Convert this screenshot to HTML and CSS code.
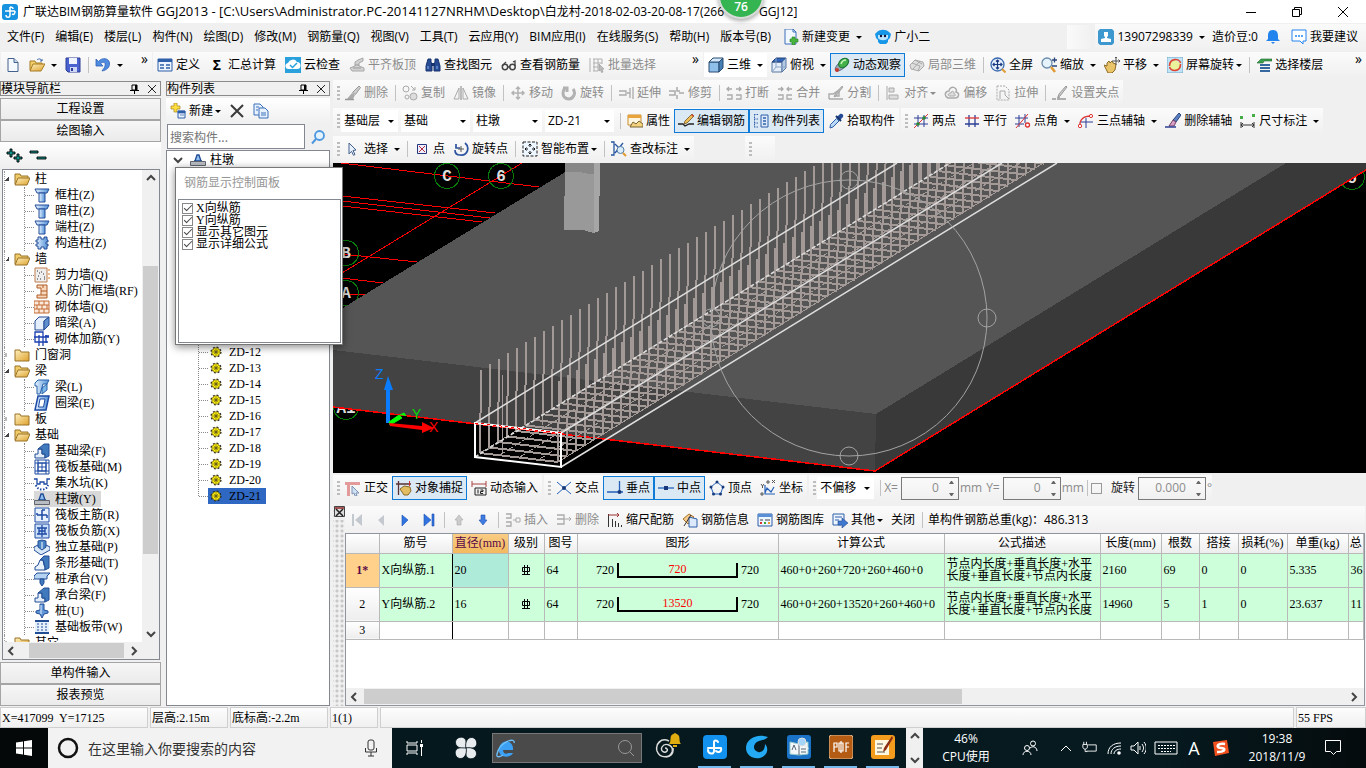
FILE: index.html
```html
<!DOCTYPE html>
<html lang="zh-CN">
<head>
<meta charset="utf-8">
<title>广联达BIM钢筋算量软件 GGJ2013</title>
<link rel="stylesheet" href="styles.css">
</head>
<body>
<svg class="sprite" aria-hidden="true">
<defs>
<linearGradient id="g-fold" x1="0" y1="0" x2="1" y2="1"><stop offset="0" stop-color="#fdf0bf"/><stop offset="1" stop-color="#dfa22c"/></linearGradient>
<linearGradient id="g-blue" x1="0" y1="0" x2="1" y2="0"><stop offset="0" stop-color="#e6f2ff"/><stop offset="1" stop-color="#4f8fd6"/></linearGradient>
</defs>
<symbol id="new" viewBox="0 0 16 16"><path d="M3 1.500h6l4 4v9H3z" fill="#f4f9ff" stroke="#44618d"/><path d="M9 1.500v4h4" fill="#c5d8ee" stroke="#44618d"/></symbol>
<symbol id="open" viewBox="0 0 16 16"><path d="M1 13V4h5l1 2h6v2" fill="#f2cf6d" stroke="#a77d22"/><path d="M1 14l3-7h12l-4 7z" fill="url(#g-fold)" stroke="#a77d22"/><path d="M8 3c2-2 4-1 5 1m0-2v2h-2" fill="none" stroke="#3a64a8"/></symbol>
<symbol id="save" viewBox="0 0 16 16"><path d="M1 1h14v14H3l-2-2z" fill="#4a62cf" stroke="#2c3c96"/><path d="M4 1h8v6H4z" fill="#eef3ff"/><path d="M5 10h7v5H5z" fill="#cdd6f4"/><path d="M6 11h2v3H6z" fill="#2c3c96"/></symbol>
<symbol id="undo" viewBox="0 0 16 16"><path d="M1 2v7h7L5.500 6.500C9 4 11 6 10 9c-.5 2-2 3-3 5 5-1 8-4 7.500-8C14 1 7 0 3.500 4.500z" fill="#4f8be0" stroke="#2d5fb4" stroke-width=".8"/></symbol>
<symbol id="define" viewBox="0 0 16 16"><path d="M1 2h14v12H1z" fill="#eaf3ff" stroke="#2f5fa8"/><path d="M1 2h14v3H1z" fill="#2f5fa8"/><path d="M3 8h4m2 0h4M3 11h4m2 0h4" stroke="#2f5fa8" stroke-width="1.500"/></symbol>
<symbol id="cloud" viewBox="0 0 16 16"><path d="M0 0h16v16H0z" fill="#2aa0dc"/><path d="M4 12a3 3 0 0 1-1-6 5 5 0 0 1 9-1 3.500 3.500 0 0 1 0 7z" fill="#fff"/><path d="M5 8l2.500 2.500L12 6" fill="none" stroke="#2aa0dc" stroke-width="1.500"/></symbol>
<symbol id="flat" viewBox="0 0 16 16"><path d="M1 11l5-2V5l3-2 5-2v3l-4 2v3l5 2v3H3z" fill="#d2d2d2" stroke="#a8a8a8"/><path d="M4 11h8M6 8h4" stroke="#999"/></symbol>
<symbol id="find" viewBox="0 0 16 16"><path d="M3 2h3v3l1 2v7H1V9zM10 2h3l2 7v5H9V7l1-2z" fill="#274b94" stroke="#18336f"/><path d="M3 9v3m9-3v3" stroke="#8fb4ed"/><path d="M6 6h4v3H6z" fill="#18336f"/></symbol>
<symbol id="glasses" viewBox="0 0 16 16"><circle cx="4" cy="10" r="2.700" fill="none" stroke="#444" stroke-width="1.500"/><circle cx="11.500" cy="10" r="2.700" fill="none" stroke="#444" stroke-width="1.500"/><path d="M1 9l4-4M6.500 10h2.500M14 9V4l-2 1" fill="none" stroke="#444" stroke-width="1.300"/></symbol>
<symbol id="batch" viewBox="0 0 16 16"><path d="M1 1v14M4 2h9M4 6h9M4 10h5M4 14h5M5 2v12M9 2v12M13 2v5" stroke="#b0b0b0" fill="none"/><path d="M10 7l5 5-2 .5 1 2.500-1.500.5-1-2.500L10 14z" fill="#bbb" stroke="#999" stroke-width=".6"/></symbol>
<symbol id="cube" viewBox="0 0 16 16"><path d="M1 5h10v10H1z" fill="#8fc0ea" stroke="#2b4a70"/><path d="M1 5l4-4h10l-4 4z" fill="#d3eafc" stroke="#2b4a70"/><path d="M15 1v10l-4 4V5z" fill="#4680b4" stroke="#2b4a70"/></symbol>
<symbol id="topview" viewBox="0 0 16 16"><path d="M1 5h10v10H1z" fill="#e4edf8" stroke="#5877a0"/><path d="M1 5l4-4h10l-4 4z" fill="#3366b8" stroke="#27457a"/><path d="M15 1v10l-4 4V5z" fill="#b4cbe6" stroke="#5877a0"/><path d="M5 1v9L1 15m4-5h10" fill="none" stroke="#8aa4c8"/></symbol>
<symbol id="orbit" viewBox="0 0 16 16"><ellipse cx="8" cy="8" rx="8.500" ry="3.500" transform="rotate(-40 8 8)" fill="#9aa8b4" stroke="#3b5678" stroke-width=".7"/><ellipse cx="9.500" cy="6" rx="5.500" ry="4" transform="rotate(-40 9.500 6)" fill="#43b04a" stroke="#1d7430"/><path d="M7 7c1-3 3-4 5-4" fill="none" stroke="#c5f5bd" stroke-width="1.500"/><circle cx="3" cy="13" r="2" fill="#c73b2e"/></symbol>
<symbol id="local3d" viewBox="0 0 16 16"><path d="M1 8l5-5 8 2 1 4-5 5-8-2z" fill="#dedede" stroke="#aaa"/><path d="M3 6l8 3-2 5M6 3l7 4m-2-3l-7 8" fill="none" stroke="#aaa"/></symbol>
<symbol id="full" viewBox="0 0 16 16"><circle cx="7.500" cy="7.500" r="6.500" fill="#e6f0fb" stroke="#3b6ab0" stroke-width="1.300"/><path d="M12 12l3.500 3.500" stroke="#e09a32" stroke-width="2"/><path d="M7.500 3v9M3 7.500h9M6 4.500L7.500 3 9 4.500m-3 6L7.500 12 9 10.500M4.500 6L3 7.500 4.500 9m6-3L12 7.500 10.500 9" stroke="#1c3a80" stroke-width="1.200" fill="none"/></symbol>
<symbol id="zoomi" viewBox="0 0 16 16"><circle cx="6" cy="6" r="5" fill="#e6f3fd" stroke="#6b8cab" stroke-width="1.300"/><path d="M10 10l4 5" stroke="#e09a32" stroke-width="2.500"/><path d="M11 3h5M13.500 .5v5M11 9h5" stroke="#27457a" stroke-width="1.300"/></symbol>
<symbol id="pan" viewBox="0 0 16 16"><path d="M0 8l3 1V6l2-2 1 2 2-2 1 2 3 1-1 6-3 3H4z" fill="#e9c468" stroke="#8b6a24"/><path d="M12 0v8M8 4h8m-5-3l1-1 1 1m1.500 1.500L16 4l-1.500 1.500" fill="none" stroke="#555"/></symbol>
<symbol id="rot" viewBox="0 0 16 16"><path d="M0 0h16v16H0z" fill="#bfe5f7" stroke="#74a7cc"/><path d="M3 6l5-3 5 3v5l-5 3-5-3z" fill="#eaf29b"/><path d="M2.500 9c0-8 10-8 11-3m0 1c0 8-9 8-11 3" fill="none" stroke="#e04434" stroke-width="1.600"/></symbol>
<symbol id="floors" viewBox="0 0 16 16"><path d="M1 6l4-4h11v2H8l-1 2z" fill="#3da04e" stroke="#1d6a2c" stroke-width=".6"/><path d="M4 7h10v2H4zM4 10h10v2H4zM4 13h10v2H4z" fill="#35689f"/></symbol>
<symbol id="brush" viewBox="0 0 16 16"><path d="M14 1l1.500 1.500-5 7-3-2z" fill="#ccc" stroke="#999"/><path d="M7 8l3 2-2 4H2z" fill="#aaa"/><path d="M0 14.500h9" stroke="#999" stroke-width="1.500"/></symbol>
<symbol id="copy" viewBox="0 0 16 16"><circle cx="4" cy="4" r="3" fill="none" stroke="#aaa"/><circle cx="11.500" cy="11.500" r="3.500" fill="#ddd" stroke="#aaa"/><circle cx="5" cy="12" r="2" fill="none" stroke="#aaa"/><path d="M9 1l4 4m0-3v3h-3" stroke="#aaa" fill="none"/></symbol>
<symbol id="mirror" viewBox="0 0 16 16"><path d="M1 14L6 3v11zM15 14L10 3v11z" fill="none" stroke="#aaa"/><path d="M8 1v14" stroke="#aaa" stroke-width="1.500"/></symbol>
<symbol id="move" viewBox="0 0 16 16"><path d="M8 2v12M2 8h12M6 4l2-2 2 2m-4 8l2 2 2-2M4 6L2 8l2 2m8-4l2 2-2 2" fill="none" stroke="#b2b2b2" stroke-width="1.500"/></symbol>
<symbol id="rotate" viewBox="0 0 16 16"><path d="M3 4c-3 8 2 10 5 10s8-5 4-10M2 3h4v4" fill="none" stroke="#b2b2b2" stroke-width="3"/></symbol>
<symbol id="extend" viewBox="0 0 16 16"><path d="M1 6h7v4H1m8-2h3M12 3v10m3-11v12" stroke="#aaa" fill="none" stroke-width="1.300"/></symbol>
<symbol id="trim" viewBox="0 0 16 16"><path d="M0 6h6v4H0m10-2h5M8 2v4h3m-3 8v-4" stroke="#aaa" fill="none" stroke-width="1.500"/></symbol>
<symbol id="break" viewBox="0 0 16 16"><path d="M1 4h5m4 0h5M3 2L1 4l2 2m10-4l2 2-2 2M1 10h5v4H1m9-4h5v4h-5" stroke="#aaa" fill="none" stroke-width="1.300"/></symbol>
<symbol id="merge" viewBox="0 0 16 16"><path d="M1 4h5m4 0h5M4 2l2 2-2 2m8-4l-2 2 2 2M1 10h5v4H1m14-4h-5v4h5" stroke="#aaa" fill="none" stroke-width="1.300"/></symbol>
<symbol id="split" viewBox="0 0 16 16"><path d="M1 14V9h4l6-4v6H7M1 14h14" fill="none" stroke="#aaa" stroke-width="1.400"/><path d="M14 1l1 1-7 9-2 1 1-3z" fill="#bbb" stroke="#999" stroke-width=".7"/></symbol>
<symbol id="align" viewBox="0 0 16 16"><path d="M2 1v14M4 3h5v4H4zM4 10h9v4H4z" fill="#ddd" stroke="#aaa"/></symbol>
<symbol id="offset" viewBox="0 0 16 16"><path d="M4 13c-5-3-2-7 1-7 1-6 9-4 7 1 4 1 3 6-1 6z" fill="none" stroke="#aaa" stroke-width="1.500"/><path d="M5 11c-2-2 0-3 2-3 0-3 4-2 3 1 2 0 2 2 0 2z" fill="#ddd" stroke="#aaa"/></symbol>
<symbol id="stretch" viewBox="0 0 16 16"><path d="M2 1h8l4 4v10H2z" fill="none" stroke="#aaa" stroke-dasharray="2 1"/><path d="M5 14V6h5m0 0v4l4 4" fill="none" stroke="#aaa"/></symbol>
<symbol id="grip" viewBox="0 0 16 16"><path d="M0 14h4m4 0h6" stroke="#999" stroke-width="1.500"/><path d="M5 12h3v3H5z" fill="#aaa"/><path d="M14 1l1 1-7 9-2 1 1-3z" fill="#ccc" stroke="#999"/></symbol>
<symbol id="props" viewBox="0 0 16 16"><path d="M1 2h13v10H1z" fill="#fff6e0" stroke="#c78d2d"/><path d="M1 2h13v3H1z" fill="#e8a33a"/><path d="M3 14l3-5 3 2 3-3 4 3v3H5z" fill="#f4d37e" stroke="#7d6332"/></symbol>
<symbol id="edit" viewBox="0 0 16 16"><path d="M0 11h5l2 2 4-2h5" fill="none" stroke="#222" stroke-width="1.300"/><path d="M14 1l2 2-7 7-3 1 1-3z" fill="#efbf55" stroke="#6d5325" stroke-width=".8"/><path d="M14 1l2 2-1 1-2-2z" fill="#cb4b3d"/></symbol>
<symbol id="list" viewBox="0 0 16 16"><path d="M1 1.500h5M1 6h5M1 10h5M1 14h5M1.500 1v13" stroke="#2f5fa8" stroke-dasharray="1.500 1"/><path d="M8 2h7v12H8z" fill="#dbe9fa" stroke="#2f5fa8"/><path d="M10 5h3m-3 3h3m-3 3h3" stroke="#2f5fa8" stroke-width="1.500"/></symbol>
<symbol id="pick" viewBox="0 0 16 16"><path d="M9 4l3-3c2-1 4 1 3 3l-3 3z" fill="#254a96"/><path d="M8 3l5 5" stroke="#16336e" stroke-width="2"/><path d="M8.500 5.500l2.500 2.500-6 6-3 1 .5-3.500z" fill="#b9d9f8" stroke="#2f5fa8"/></symbol>
<symbol id="twopt" viewBox="0 0 16 16"><path d="M5 2v12M11 2v12M1 5h14M1 11h14" stroke="#2d3f96"/><path d="M1 15L15 1" stroke="#d33"/><circle cx="5" cy="11" r="1.800" fill="#2a8a34"/><circle cx="11" cy="5" r="1.800" fill="#2a8a34"/></symbol>
<symbol id="parallel" viewBox="0 0 16 16"><path d="M5 2v12M11 2v12M1 11h14" stroke="#2d3f96" stroke-width="1.300"/><path d="M1 5h14" stroke="#d33" stroke-width="1.300"/></symbol>
<symbol id="angle" viewBox="0 0 16 16"><path d="M4 2v12M10 1v9M0 5h13M0 11h9" stroke="#2d3f96"/><path d="M1 15L13 1" stroke="#d33"/><circle cx="12.500" cy="12" r="2" fill="#fff" stroke="#d33" stroke-width="1.300"/></symbol>
<symbol id="arc3" viewBox="0 0 16 16"><path d="M2 14C1 6 6 3 13 3" fill="none" stroke="#d33" stroke-width="1.300"/><path d="M8 5v10M3 9h12" stroke="#2d3f96"/><circle cx="2" cy="13" r="1.700" fill="#fff" stroke="#d33"/><circle cx="13" cy="3" r="1.600" fill="#fff" stroke="#d33"/></symbol>
<symbol id="delaxis" viewBox="0 0 16 16"><path d="M14 0l2 2-5 7-3-2z" fill="#5d7fc4" stroke="#27457a"/><path d="M8 7l3 2-2 4H4z" fill="#d99fc4" stroke="#704266"/><path d="M0 14h11" stroke="#2d3f96" stroke-width="1.500"/></symbol>
<symbol id="dim" viewBox="0 0 16 16"><path d="M1 9v6m13-6v6M1 12h13M3 10l-2 2 2 2m9-4l2 2-2 2" stroke="#333" fill="none"/><path d="M0 3h3v3H0zM12 1h3v3h-3z" fill="#45ad48"/></symbol>
<symbol id="cursor" viewBox="0 0 16 16"><path d="M4 2l7 7-3 .5 2 4-1.500.8-2-4L4 13z" fill="#e8f1fc" stroke="#44618d"/></symbol>
<symbol id="point" viewBox="0 0 16 16"><path d="M3.500 3.500h9v9h-9z" fill="#eef" stroke="#23357d"/><path d="M5 5l6 6m0-6l-6 6" stroke="#b22b3f"/></symbol>
<symbol id="rotpt" viewBox="0 0 16 16"><path d="M3 3v4h4M12 2c5 4 3 13-5 12-3 0-5-2-5-5" fill="none" stroke="#2c53a0" stroke-width="1.700"/><path d="M8 5v6M5 8h6" stroke="#555"/></symbol>
<symbol id="smart" viewBox="0 0 16 16"><path d="M1 1h14v14H1z" fill="#eef6ff" stroke="#222" stroke-dasharray="3 1.500"/><path d="M8 3v3m0 4v3M3 8h3m4 0h3M6.500 4.500L8 3l1.500 1.500m-3 7L8 13l1.500-1.500m-5-5L3 8l1.500 1.500m7-3L13 8l-1.500 1.500" fill="none" stroke="#111"/></symbol>
<symbol id="note" viewBox="0 0 16 16"><path d="M0 1h3v13H0M4 12L12 2M4 3l4 4" fill="none" stroke="#2856a3" stroke-width="1.300"/><circle cx="9.500" cy="9" r="3.500" fill="#d9edfc" stroke="#557ca4"/><path d="M12 12l3 3" stroke="#e09a32" stroke-width="2"/></symbol>
<symbol id="ortho" viewBox="0 0 16 16"><path d="M0 2h15v3H5v11H2V5H0z" fill="#e39a9a"/><path d="M7 6l7 7h-3l1 3h-2l-1-3-2 1z" fill="#cfe0f5" stroke="#7e93b0"/></symbol>
<symbol id="snap" viewBox="0 0 16 16"><path d="M2.500 1v14M0 4h15" stroke="#5a3030" stroke-width="1.300"/><path d="M4 9l4-3 6 1 1 4-3 4H8z" fill="#e2bd62" stroke="#8b6a24"/><path d="M13.500 1v5" stroke="#c33"/></symbol>
<symbol id="dyn" viewBox="0 0 16 16"><path d="M1 1v6m14-6v6M1 4h14" stroke="#a44" fill="none"/><path d="M4 8h11v7H4z" fill="#eee" stroke="#222"/><path d="M7 9.500v4M9.500 10h2.500v1.500H9.500v2H12" stroke="#222" fill="none"/></symbol>
<symbol id="cross" viewBox="0 0 16 16"><path d="M1 2l14 12M15 2L1 14" stroke="#2460b8"/><circle cx="8" cy="8" r="2" fill="#17397c"/></symbol>
<symbol id="perp" viewBox="0 0 16 16"><path d="M0 12h16M12.500 1v11" stroke="#2460b8" stroke-width="1.300"/><circle cx="12.500" cy="12" r="2" fill="#17397c"/></symbol>
<symbol id="mid" viewBox="0 0 16 16"><path d="M0 8h16" stroke="#2460b8" stroke-width="1.300"/><path d="M6 6h4v4H6z" fill="#17397c"/></symbol>
<symbol id="vertex" viewBox="0 0 16 16"><path d="M8 2l6 5-2.500 7h-7L2 7z" fill="none" stroke="#2460b8"/><circle cx="8" cy="2" r="1.500" fill="#17397c"/><circle cx="14" cy="7" r="1.500" fill="#17397c"/><circle cx="2" cy="7" r="1.500" fill="#17397c"/><circle cx="4.500" cy="14" r="1.500" fill="#17397c"/><circle cx="11.500" cy="14" r="1.500" fill="#17397c"/></symbol>
<symbol id="coord" viewBox="0 0 16 16"><path d="M5 5v9h10M5 13l2-5 4 4 3-5" fill="none" stroke="#2460b8" stroke-width="1.200"/><path d="M1 4l1.500 2L4 4M2.500 6v2M12 0l3 3m0-3l-3 3M7 1h2v2H7zM1 13h2v2H1z" stroke="#555" fill="none"/></symbol>
<symbol id="insert" viewBox="0 0 16 16"><path d="M1 2h5v4H1m0 4h5v4H1" stroke="#aaa" stroke-width="1.300" fill="none"/><path d="M15 6h-4v4h4zM11 8H8" stroke="#aaa" fill="none"/></symbol>
<symbol id="delrow" viewBox="0 0 16 16"><path d="M1 3h7v4H1m0 0h7v5H1" stroke="#aaa" stroke-width="1.300" fill="none"/><path d="M8 7h7m-2-2l2 2-2 2" stroke="#aaa" fill="none"/></symbol>
<symbol id="scale" viewBox="0 0 16 16"><path d="M1.500 2v13M5.500 7v8M8.500 9v6M11.500 11v4M14.500 13v2" stroke="#333"/><path d="M1 3h11m-2-2l2 2-2 2" stroke="#933" fill="none"/></symbol>
<symbol id="info" viewBox="0 0 16 16"><path d="M1 7l6-5 5 3-6 7z" fill="#f6c98a" stroke="#a8752a"/><path d="M7 5l8 2v8H7z" fill="#dbe9fa" stroke="#2f5fa8"/><path d="M2 14L9 3" stroke="#333"/></symbol>
<symbol id="lib" viewBox="0 0 16 16"><path d="M1 2h14v12H1z" fill="#edf5ff" stroke="#2f5fa8"/><path d="M1 2h14v3H1z" fill="#5a8fd6"/><path d="M3 8h3m2 0h5" stroke="#444"/><path d="M3 11h2" stroke="#d33" stroke-width="2"/><path d="M7 11h2" stroke="#3a3" stroke-width="2"/><path d="M11 11h2" stroke="#e93" stroke-width="2"/></symbol>
<symbol id="other" viewBox="0 0 16 16"><path d="M1 2h11v8l-3 3H1z" fill="#edf5ff" stroke="#2f5fa8"/><path d="M3 5h7M3 8h4" stroke="#2f5fa8"/><path d="M6 9h4V6l6 5-6 5v-3H6z" fill="#3f78cf" stroke="#234b90" stroke-width=".6"/></symbol>
<symbol id="prev" viewBox="0 0 16 16"><path d="M11 3v11L5 8z" fill="#c4c8cf"/></symbol>
<symbol id="first" viewBox="0 0 16 16"><path d="M13 2v12L6 8zM3 2h2v12H3z" fill="#c4c8cf"/></symbol>
<symbol id="next" viewBox="0 0 16 16"><path d="M5 3v11l6-6z" fill="#2f74e0" stroke="#1c52b0" stroke-width=".6"/></symbol>
<symbol id="last" viewBox="0 0 16 16"><path d="M3 2v12l7-6zM11 2h2v12h-2z" fill="#2f74e0" stroke="#1c52b0" stroke-width=".6"/></symbol>
<symbol id="up" viewBox="0 0 16 16"><path d="M8 3l4 5h-2v5H6V8H4z" fill="#ccc" stroke="#aaa" stroke-width=".6"/></symbol>
<symbol id="down" viewBox="0 0 16 16"><path d="M8 13l4-5h-2V3H6v5H4z" fill="#3f7be0" stroke="#1c52b0" stroke-width=".6"/></symbol>
<symbol id="user" viewBox="0 0 16 16"><path d="M2 0h12l2 2v12l-2 2H2l-2-2V2z" fill="#3d98cf"/><path d="M6 3h4v4l-1 1v1l4 1v3H3v-3l4-1V8L6 7z" fill="#fff"/></symbol>
<symbol id="bell" viewBox="0 0 16 16"><path d="M8 1c4 0 5 3 5 6v3l2 2H1l2-2V7c0-3 1-6 5-6z" fill="#2484ee"/><path d="M6 13h4l-2 2z" fill="#2484ee"/></symbol>
<symbol id="chat" viewBox="0 0 16 16"><path d="M1 1h14v11h-3v3l-3-3H1z" fill="#fff" stroke="#2484ee"/><path d="M4 7h8" stroke="#2484ee" stroke-width="1.500" stroke-dasharray="2 1"/></symbol>
<symbol id="docplus" viewBox="0 0 16 16"><path d="M2 0h8l3 3v12H2z" fill="#f2f8ff" stroke="#3a70b8"/><path d="M10 0v3h3" fill="none" stroke="#3a70b8"/><path d="M9 8h3v2h3v3h-3v3H9v-3H7v-3h2z" fill="#49b43c" stroke="#27822a" stroke-width=".6"/></symbol>
<symbol id="mascot" viewBox="0 0 16 16"><path d="M0 5l2-2c3-3 9-3 12 0l2 2-1 4-2 2v2l-2 2H5l-2-2v-2L1 9z" fill="#1897e8"/><path d="M3 6h10v3c-2 3-8 3-10 0z" fill="#bfe7ff"/><circle cx="6" cy="7" r="1.200" fill="#113"/><circle cx="10" cy="7" r="1.200" fill="#113"/></symbol>
<symbol id="newcomp" viewBox="0 0 16 16"><path d="M4 0h3v3h3v3H7v3H4V6H1V3h3z" fill="#ffdf3e" stroke="#a8841d" stroke-width=".7"/><path d="M8 8h7v7H8z" fill="#eaf3ff" stroke="#2f5fa8"/><path d="M8 8h7v2H8zM10 12h4" fill="#2f5fa8" stroke="#2f5fa8" stroke-width=".7"/></symbol>
<symbol id="xmark" viewBox="0 0 16 16"><path d="M2 2l12 12M14 2L2 14" stroke="#3a3a3a" stroke-width="2"/></symbol>
<symbol id="copy2" viewBox="0 0 16 16"><path d="M1 1h6l3 3v8H1z" fill="#e8f2ff" stroke="#3a70b8"/><path d="M6 5h6l3 3v7H6z" fill="#e8f2ff" stroke="#3a70b8"/><path d="M8 10h5m-5 2h5M3 4h3M3 7h2" stroke="#3a70b8"/></symbol>
<symbol id="search" viewBox="0 0 16 16"><circle cx="9.500" cy="6.500" r="4.500" fill="#e3f3ff" stroke="#4c97de" stroke-width="1.800"/><path d="M6 10l-4 4.500" stroke="#4c97de" stroke-width="2"/></symbol>
<symbol id="folder" viewBox="0 0 16 16"><path d="M1 3h5l1 2h8v9H1z" fill="url(#g-fold)" stroke="#997328"/></symbol>
<symbol id="folderopen" viewBox="0 0 16 16"><path d="M1 13V3h5l1 2h7v3" fill="#f0cc69" stroke="#997328"/><path d="M1 14l3-7h12l-3 7z" fill="url(#g-fold)" stroke="#997328"/></symbol>
<symbol id="column" viewBox="0 0 16 16"><path d="M1 2h14l-2 4H3z" fill="url(#g-blue)" stroke="#254c98"/><path d="M5 6h6v9H5z" fill="url(#g-blue)" stroke="#254c98"/></symbol>
<symbol id="gcol" viewBox="0 0 16 16"><path d="M4 2h3v2h3V2h3v3h1v2h-2v2h2v2h-1v3h-3v-2H7v2H4v-3H2V9h2V7H2V5h2z" fill="url(#g-blue)" stroke="#254c98"/></symbol>
<symbol id="shear" viewBox="0 0 16 16"><path d="M1 1h12v14H1z" fill="#eee" stroke="#c07b4b"/><path d="M3 4h1m3 1h1m-4 4h1m4-2h1m-4 5h1m3 0h1M5 6h1m4 4h1M3 12h1" stroke="#333"/><path d="M14 3h2m-2 4h2m-2 4h2" stroke="#d77a24"/></symbol>
<symbol id="doorwall" viewBox="0 0 16 16"><path d="M3 2h10v13H3v-3h4V5H3z" fill="#f8d8bd" stroke="#b05a24"/><path d="M7 8h6M7 12h6M9 2v3" stroke="#b05a24"/></symbol>
<symbol id="brick" viewBox="0 0 16 16"><path d="M0 2h15v12H0z" fill="#fbe9dc" stroke="#c36a35"/><path d="M0 6h15M0 10h15M5 2v4m5-4v4M3 6v4m5-4v4m5-4v4M5 10v4m5-4v4" stroke="#c36a35"/></symbol>
<symbol id="hbeam" viewBox="0 0 16 16"><path d="M1 6l4-4h10l-5 4v9H1z" fill="#e5effb" stroke="#254c98"/><path d="M10 6l5-4v8l-5 5z" fill="#5f8fce" stroke="#254c98"/></symbol>
<symbol id="rebarwall" viewBox="0 0 16 16"><path d="M1 1h8v10H1zM0 6h15M5 4v11m4-5v5M12 4v8m-1-7h4M1 11h13" fill="none" stroke="#1b3fb0" stroke-width="1.300"/></symbol>
<symbol id="beam" viewBox="0 0 16 16"><path d="M1 4l3-3h11l-2 4H9L6 15H3V7H1z" fill="url(#g-blue)" stroke="#2460a8"/><path d="M13 5v6l-5 4V9z" fill="#7db8ea" stroke="#2460a8"/></symbol>
<symbol id="ring" viewBox="0 0 16 16"><path d="M4 1h11l-3 14H1z" fill="url(#g-blue)" stroke="#1d4aa4" stroke-width="1.500"/><path d="M6 4h5l-1.500 8h-5z" fill="#fff" stroke="#1d4aa4"/></symbol>
<symbol id="fbeam" viewBox="0 0 16 16"><path d="M1 15v-4h3V6h4v5h3v4z" fill="#e5effb" stroke="#204c94"/><path d="M4 6l6-5h5v12l-4 2v-4H8V6z" fill="#407abd" stroke="#204c94"/></symbol>
<symbol id="raft" viewBox="0 0 16 16"><path d="M1 1h14v14H1zM4 4h8v8H4zM1 4h14M1 12h14M4 1v14m8-14v14M8 4v8M4 8h8" fill="none" stroke="#1d4aa4"/></symbol>
<symbol id="pit" viewBox="0 0 16 16"><path d="M0 4h3v5h3V7h4v2h3V4h3" fill="none" stroke="#1d4aa4" stroke-width="1.300"/><path d="M2 10c1 6 11 6 12 0" fill="none" stroke="#1d4aa4" stroke-dasharray="1.500 1.500" stroke-width="2"/></symbol>
<symbol id="pier" viewBox="0 0 16 16"><path d="M4 9h1l2-6h2l2 6h1z" fill="#8fbdf0" stroke="#204c94" stroke-width="1.300"/><path d="M.5 9.500h15v4H.5z" fill="#b9bcc2" stroke="#60656e"/></symbol>
<symbol id="rmain" viewBox="0 0 16 16"><path d="M1 1h14v14H1z" fill="#e8f2ff" stroke="#1d4aa4"/><path d="M3 8h10M8 3v10M3 6v2m10 0v3M8 3h3" fill="none" stroke="#1d4aa4" stroke-width="1.500"/></symbol>
<symbol id="rneg" viewBox="0 0 16 16"><path d="M1 1h14v14H1z" fill="#cadef7" stroke="#1d4aa4"/><path d="M3 5h10M3 11h10M5 5v6m6-6v6M8 2v12M5 8h6" fill="none" stroke="#1d4aa4" stroke-width="1.300"/></symbol>
<symbol id="indep" viewBox="0 0 16 16"><path d="M0 8l4-2h8l4 2v3l-9 5-7-5z" fill="#d9e8f8" stroke="#204c94"/><path d="M4 2l4-1 4 1v6l-4 3-4-3z" fill="#4a84c4" stroke="#204c94"/><path d="M8 3v7" stroke="#fff"/></symbol>
<symbol id="stripf" viewBox="0 0 16 16"><path d="M1 15v-3l3-2 2-5h3l1 5 1 2v3z" fill="#eaf2fc" stroke="#204c94"/><path d="M6 5l4-4h5v12l-4 2v-3L9 5z" fill="#407abd" stroke="#204c94"/></symbol>
<symbol id="cap" viewBox="0 0 16 16"><path d="M0 5l3-3h13l-3 3v3H0z" fill="#b5d3f2" stroke="#204c94"/><path d="M6 8h4v4l-2 3-2-3z" fill="#407abd" stroke="#204c94"/></symbol>
<symbol id="pile" viewBox="0 0 16 16"><path d="M6 1h4v6l4 1v2l-4 1-2 4-2-4-4-1V8l4-1z" fill="#5f97d8" stroke="#204c94"/><path d="M7 2v9" stroke="#e5f0fd"/></symbol>
<symbol id="band" viewBox="0 0 16 16"><path d="M1 2h14v12H1z" fill="#e5f0fd"/><path d="M1 2h14M1 14h14" stroke="#204c94" stroke-width="2"/><path d="M4 4v8m4-8v8m4-8v8" stroke="#204c94" stroke-dasharray="2 1"/></symbol>
<symbol id="gear" viewBox="0 0 16 16"><circle cx="8" cy="8" r="4.800" fill="none" stroke="#222" stroke-width="1.500" stroke-dasharray="1.900 1.870"/><circle cx="8" cy="8" r="4.200" fill="#ffee12" stroke="#6b6500" stroke-width=".7"/><path d="M8 4.500v7M4.500 8h7M5.500 5.500l5 5m0-5l-5 5" stroke="#6b6500" stroke-width=".6"/><circle cx="8" cy="8" r="1" fill="#ffee12" stroke="#222" stroke-width=".8"/></symbol>
<symbol id="pin" viewBox="0 0 16 16"><path d="M6 4h5v5H6zM4 9.500h9M8.500 9v4" fill="none" stroke="#000"/><path d="M9 4h2v5H9z"/></symbol>
<symbol id="shut" viewBox="0 0 16 16"><path d="M4 4l8 8m0-8l-8 8" stroke="#222"/></symbol>
<symbol id="chev-u" viewBox="0 0 16 16"><path d="M4 10l4-4 4 4" fill="none" stroke="#444" stroke-width="2"/></symbol>
<symbol id="chev-d" viewBox="0 0 16 16"><path d="M4 6l4 4 4-4" fill="none" stroke="#444" stroke-width="2"/></symbol>
<symbol id="chev-l" viewBox="0 0 16 16"><path d="M10 4L6 8l4 4" fill="none" stroke="#444" stroke-width="2"/></symbol>
<symbol id="chev-r" viewBox="0 0 16 16"><path d="M6 4l4 4-4 4" fill="none" stroke="#444" stroke-width="2"/></symbol>
<symbol id="level" viewBox="0 0 16 16"><path d="M6.500 3v9m3-9v9M4.500 5.500h7v4h-7zM4 12.500h8" fill="none" stroke="#000"/></symbol>
</svg>

<div class="app">
<header class="titlebar">
  <svg class="ic" viewBox="0 0 16 16"><rect width="16" height="16" rx="3" fill="#1592e0"/><path d="M8 3v8c0 3-4 3-4 0M3 7h10m0 0c0 3-1 4-3 3M8 3c2 0 3 1 3 2" fill="none" stroke="#fff" stroke-width="1.500"/></svg>
  <h1>广联达BIM钢筋算量软件 <span class="path">GGJ2013 - [C:\Users\Administrator.PC-20141127NRHM\Desktop\</span>白龙村-2018-02-03-20-08-17(266<span class="after-ball">GGJ12]</span></h1>
  <div class="winbtns">
    <button aria-label="最小化"><svg viewBox="0 0 16 16"><path d="M3 8.500h10" stroke="#000"/></svg></button>
    <button aria-label="还原"><svg viewBox="0 0 16 16"><path d="M3.500 5.500h7v7h-7zM5.500 5V3.500h7v7H11" fill="none" stroke="#000"/></svg></button>
    <button aria-label="关闭"><svg viewBox="0 0 16 16"><path d="M3 3l10 10m0-10L3 13" stroke="#000"/></svg></button>
  </div>
  <div class="ball">76</div>
</header>

<nav class="menubar">
  <a href="#">文件(F)</a><a href="#">编辑(E)</a><a href="#">楼层(L)</a><a href="#">构件(N)</a><a href="#">绘图(D)</a><a href="#">修改(M)</a><a href="#">钢筋量(Q)</a><a href="#">视图(V)</a><a href="#">工具(T)</a><a href="#">云应用(Y)</a><a href="#">BIM应用(I)</a><a href="#">在线服务(S)</a><a href="#">帮助(H)</a><a href="#">版本号(B)</a>
  <button class="tool"><svg class="ic"><use href="#docplus"/></svg>新建变更<i class="caret"></i></button>
  <button class="tool"><svg class="ic"><use href="#mascot"/></svg>广小二</button>
  <span class="blank"></span>
  <div class="account">
    <button class="tool"><svg class="ic"><use href="#user"/></svg>13907298339<i class="caret"></i></button>
    <span>造价豆:0</span>
    <button class="tool" aria-label="通知"><svg class="ic"><use href="#bell"/></svg></button>
    <button class="tool"><svg class="ic"><use href="#chat"/></svg>我要建议</button>
  </div>
</nav>

<div class="mainbar">
  <div class="strip s-file">
    <button class="tool" aria-label="新建"><svg class="ic"><use href="#new"/></svg></button>
    <button class="tool" aria-label="打开"><svg class="ic"><use href="#open"/></svg><i class="caret"></i></button>
    <button class="tool" aria-label="保存"><svg class="ic"><use href="#save"/></svg></button>
    <i class="sep"></i>
    <button class="tool" aria-label="撤销"><svg class="ic"><use href="#undo"/></svg><i class="caret"></i></button>
    <span class="more">»</span>
  </div>
  <div class="strip s-calc">
    <button class="tool"><svg class="ic"><use href="#define"/></svg>定义</button>
    <button class="tool"><b class="sigma">Σ</b>汇总计算</button>
    <button class="tool"><svg class="ic"><use href="#cloud"/></svg>云检查</button>
    <button class="tool" disabled><svg class="ic"><use href="#flat"/></svg>平齐板顶</button>
    <button class="tool"><svg class="ic"><use href="#find"/></svg>查找图元</button>
    <button class="tool"><svg class="ic"><use href="#glasses"/></svg>查看钢筋量</button>
    <button class="tool" disabled><svg class="ic"><use href="#batch"/></svg>批量选择</button>
    <span class="more">»</span>
  </div>
  <div class="strip s-view">
    <button class="tool pale"><svg class="ic"><use href="#cube"/></svg>三维<i class="caret"></i></button>
    <button class="tool"><svg class="ic"><use href="#topview"/></svg>俯视<i class="caret"></i></button>
    <button class="tool on"><svg class="ic"><use href="#orbit"/></svg>动态观察</button>
    <button class="tool" disabled><svg class="ic"><use href="#local3d"/></svg>局部三维</button>
    <i class="sep"></i>
    <button class="tool"><svg class="ic"><use href="#full"/></svg>全屏</button>
    <button class="tool"><svg class="ic"><use href="#zoomi"/></svg>缩放<i class="caret"></i></button>
    <button class="tool"><svg class="ic"><use href="#pan"/></svg>平移<i class="caret"></i></button>
    <button class="tool"><svg class="ic"><use href="#rot"/></svg>屏幕旋转<i class="caret tight"></i></button>
    <i class="sep"></i>
    <button class="tool"><svg class="ic"><use href="#floors"/></svg>选择楼层</button>
    <span class="more">»</span>
  </div>
</div>

<main class="work">
  <aside class="dock nav-dock">
    <h2 class="dock-head"><span>模块导航栏</span><svg class="ic"><use href="#pin"/></svg><svg class="ic"><use href="#shut"/></svg></h2>
    <button class="section">工程设置</button>
    <button class="section">绘图输入</button>
    <div class="expanders">
      <svg viewBox="0 0 48 20" width="48" height="20"><path d="M7 5h3V2h2v3h3v2h-3v3h-2V7H7zM14 10h3V7h2v3h3v2h-3v3h-2v-3h-3zM30 4h8v2h-8zM37 10h9v2h-9z" fill="#10918a" stroke="#000" stroke-width=".9"/></svg>
    </div>
    <div class="treebox">
      <ul class="tree">
        <li class="open"><span class="node"><svg class="ic"><use href="#folderopen"/></svg>柱</span>
          <ul><li><svg class="ic"><use href="#column"/></svg>框柱(Z)</li><li><svg class="ic"><use href="#column"/></svg>暗柱(Z)</li><li><svg class="ic"><use href="#column"/></svg>端柱(Z)</li><li><svg class="ic"><use href="#gcol"/></svg>构造柱(Z)</li></ul></li>
        <li class="open"><span class="node"><svg class="ic"><use href="#folderopen"/></svg>墙</span>
          <ul><li><svg class="ic"><use href="#shear"/></svg>剪力墙(Q)</li><li><svg class="ic"><use href="#doorwall"/></svg>人防门框墙(RF)</li><li><svg class="ic"><use href="#brick"/></svg>砌体墙(Q)</li><li><svg class="ic"><use href="#hbeam"/></svg>暗梁(A)</li><li><svg class="ic"><use href="#rebarwall"/></svg>砌体加筋(Y)</li></ul></li>
        <li><span class="node"><svg class="ic"><use href="#folder"/></svg>门窗洞</span></li>
        <li class="open"><span class="node"><svg class="ic"><use href="#folderopen"/></svg>梁</span>
          <ul><li><svg class="ic"><use href="#beam"/></svg>梁(L)</li><li><svg class="ic"><use href="#ring"/></svg>圈梁(E)</li></ul></li>
        <li><span class="node"><svg class="ic"><use href="#folder"/></svg>板</span></li>
        <li class="open"><span class="node"><svg class="ic"><use href="#folderopen"/></svg>基础</span>
          <ul><li><svg class="ic"><use href="#fbeam"/></svg>基础梁(F)</li><li><svg class="ic"><use href="#raft"/></svg>筏板基础(M)</li><li><svg class="ic"><use href="#pit"/></svg>集水坑(K)</li><li><span class="current"><svg class="ic"><use href="#pier"/></svg>柱墩(Y)</span></li><li><svg class="ic"><use href="#rmain"/></svg>筏板主筋(R)</li><li><svg class="ic"><use href="#rneg"/></svg>筏板负筋(X)</li><li><svg class="ic"><use href="#indep"/></svg>独立基础(P)</li><li><svg class="ic"><use href="#stripf"/></svg>条形基础(T)</li><li><svg class="ic"><use href="#cap"/></svg>桩承台(V)</li><li><svg class="ic"><use href="#fbeam"/></svg>承台梁(F)</li><li><svg class="ic"><use href="#pile"/></svg>桩(U)</li><li><svg class="ic"><use href="#band"/></svg>基础板带(W)</li></ul></li>
        <li><span class="node"><svg class="ic"><use href="#folder"/></svg>其它</span></li>
      </ul>
      <div class="vbar"><svg class="ic"><use href="#chev-u"/></svg><i></i><svg class="ic"><use href="#chev-d"/></svg></div>
      <div class="hbar"><svg class="ic"><use href="#chev-l"/></svg><i></i><svg class="ic"><use href="#chev-r"/></svg></div>
    </div>
    <button class="section">单构件输入</button>
    <button class="section">报表预览</button>
  </aside>

  <aside class="dock list-dock">
    <h2 class="dock-head"><span>构件列表</span><svg class="ic"><use href="#pin"/></svg><svg class="ic"><use href="#shut"/></svg></h2>
    <div class="list-tools">
      <button class="tool"><svg class="ic"><use href="#newcomp"/></svg>新建<i class="caret tight"></i></button>
      <button class="tool" aria-label="删除"><svg class="ic"><use href="#xmark"/></svg></button>
      <button class="tool" aria-label="复制"><svg class="ic"><use href="#copy2"/></svg></button>
    </div>
    <form class="finder"><input type="text" placeholder="搜索构件..." aria-label="搜索构件"><button type="button" aria-label="搜索"><svg class="ic"><use href="#search"/></svg></button></form>
    <div class="listbox">
      <div class="root"><svg class="ic"><use href="#chev-d"/></svg><svg class="ic"><use href="#pier"/></svg>柱墩</div>
      <ul class="parts">
        <li><svg class="ic"><use href="#gear"/></svg>ZD-12</li><li><svg class="ic"><use href="#gear"/></svg>ZD-13</li><li><svg class="ic"><use href="#gear"/></svg>ZD-14</li><li><svg class="ic"><use href="#gear"/></svg>ZD-15</li><li><svg class="ic"><use href="#gear"/></svg>ZD-16</li><li><svg class="ic"><use href="#gear"/></svg>ZD-17</li><li><svg class="ic"><use href="#gear"/></svg>ZD-18</li><li><svg class="ic"><use href="#gear"/></svg>ZD-19</li><li><svg class="ic"><use href="#gear"/></svg>ZD-20</li><li><span class="chosen"><svg class="ic"><use href="#gear"/></svg>ZD-21</span></li>
      </ul>
    </div>
  </aside>

  <section class="stage">
    <div class="row"><div class="strip">
      <i class="grip"></i>
      <button class="tool" disabled><svg class="ic"><use href="#brush"/></svg>删除</button><i class="sep"></i>
      <button class="tool" disabled><svg class="ic"><use href="#copy"/></svg>复制</button>
      <button class="tool" disabled><svg class="ic"><use href="#mirror"/></svg>镜像</button><i class="sep"></i>
      <button class="tool" disabled><svg class="ic"><use href="#move"/></svg>移动</button>
      <button class="tool" disabled><svg class="ic"><use href="#rotate"/></svg>旋转</button><i class="sep"></i>
      <button class="tool" disabled><svg class="ic"><use href="#extend"/></svg>延伸</button>
      <button class="tool" disabled><svg class="ic"><use href="#trim"/></svg>修剪</button><i class="sep"></i>
      <button class="tool" disabled><svg class="ic"><use href="#break"/></svg>打断</button>
      <button class="tool" disabled><svg class="ic"><use href="#merge"/></svg>合并</button>
      <button class="tool" disabled><svg class="ic"><use href="#split"/></svg>分割</button><i class="sep"></i>
      <button class="tool" disabled><svg class="ic"><use href="#align"/></svg>对齐<i class="caret tight"></i></button>
      <button class="tool" disabled><svg class="ic"><use href="#offset"/></svg>偏移</button>
      <button class="tool" disabled><svg class="ic"><use href="#stretch"/></svg>拉伸</button><i class="sep"></i>
      <button class="tool" disabled><svg class="ic"><use href="#grip"/></svg>设置夹点</button>
    </div></div>
    <div class="row"><div class="strip">
      <i class="grip"></i>
      <span class="pick p-floor"><select aria-label="楼层"><option>基础层</option></select></span>
      <span class="pick"><select aria-label="构件大类"><option>基础</option></select></span>
      <span class="pick"><select aria-label="构件类型"><option>柱墩</option></select></span>
      <span class="pick"><select aria-label="构件"><option>ZD-21</option></select></span>
      <i class="sep"></i>
      <button class="tool"><svg class="ic"><use href="#props"/></svg>属性</button>
      <button class="tool on"><svg class="ic"><use href="#edit"/></svg>编辑钢筋</button>
      <button class="tool on"><svg class="ic"><use href="#list"/></svg>构件列表</button>
      <button class="tool"><svg class="ic"><use href="#pick"/></svg>拾取构件</button>
    </div><div class="strip">
      <i class="grip"></i>
      <button class="tool"><svg class="ic"><use href="#twopt"/></svg>两点</button>
      <button class="tool"><svg class="ic"><use href="#parallel"/></svg>平行</button>
      <button class="tool"><svg class="ic"><use href="#angle"/></svg>点角<i class="caret"></i></button>
      <button class="tool"><svg class="ic"><use href="#arc3"/></svg>三点辅轴<i class="caret"></i></button>
      <button class="tool"><svg class="ic"><use href="#delaxis"/></svg>删除辅轴</button>
      <button class="tool"><svg class="ic"><use href="#dim"/></svg>尺寸标注<i class="caret"></i></button>
    </div></div>
    <div class="row"><div class="strip">
      <i class="grip"></i>
      <button class="tool"><svg class="ic"><use href="#cursor"/></svg>选择<i class="caret"></i></button><i class="sep"></i>
      <button class="tool"><svg class="ic"><use href="#point"/></svg>点</button>
      <button class="tool"><svg class="ic"><use href="#rotpt"/></svg>旋转点</button><i class="sep"></i>
      <button class="tool"><svg class="ic"><use href="#smart"/></svg>智能布置<i class="caret tight"></i></button><i class="sep"></i>
      <button class="tool"><svg class="ic"><use href="#note"/></svg>查改标注<i class="caret"></i></button>
    </div><div class="strip stub"><i class="grip"></i></div></div>

    <svg class="scene" viewBox="0 0 1033 310" preserveAspectRatio="none" shape-rendering="crispEdges">
      <rect width="1033" height="310" fill="#000"/>
      <g class="axis-lines"><path d="M8 0L206 24M9 33l153 17M9 38l148 17M9 43l140 16M189 0L9 110M9 91l75 8M9 115l41 5M9 131l23 1"/></g>
      <g class="axis-rings"><circle cx="114" cy="13" r="12.500"/><circle cx="168" cy="13" r="12.500"/><circle cx="13" cy="90" r="12.500"/><circle cx="13" cy="130" r="12.500"/><circle cx="13" cy="244" r="12.500"/><circle cx="1019" cy="14" r="12.500"/></g>
      <g class="axis-names"><text x="114" y="18">C</text><text x="168" y="18">6</text><text x="13" y="95">B</text><text x="13" y="135">A</text><text x="13" y="250">A1</text><text x="1019" y="20">5</text></g>
      <path d="M0 151L247 0h706L543 251 0 187z" fill="#555"/>
      <path d="M0 187l543 64-1 57L0 244z" fill="#434343"/>
      <path d="M543 251L953 0h80v7L542 308z" fill="#393939"/>
      <path d="M232 0h35l-1 68-5 2-11-3h-19z" fill="#999"/><path d="M232 0h35v11h-10l-11-2h-14z" fill="#878787"/><path d="M261 0h6l-1 68-5 2z" fill="#a6a6a6"/>
      <path d="M0 244l542 64L1033 7" fill="none" stroke="#f00" stroke-width="1.500"/>
      <g id="rebar" class="rebar"></g>
      <g class="outline"><path d="M142 260L564 0M228 270L669 0M228 304L724 0"/><path d="M142 294L617 0" stroke-dasharray="4 2"/><path class="near" d="M142 260l86 10v34l-86-10z"/></g>
      <path d="M142 260l86 10" stroke="#f00" stroke-dasharray="3 3" fill="none"/>
      <g class="orbit-ring" shape-rendering="auto"><circle cx="516" cy="155" r="138"/><circle cx="516" cy="17" r="9"/><circle cx="516" cy="293" r="9"/><circle cx="378" cy="155" r="9"/><circle cx="654" cy="155" r="9"/></g>
      <g shape-rendering="auto">
        <path d="M53 260v-33h-2l4-14 5 14h-3v33z" fill="#0a7cff"/>
        <path d="M56 259l10-7 3 3-12 7zM67 252l4-2 2 3" fill="#0f0" stroke="#0f0"/>
        <path d="M56 260l33 3v-4l12 6-12 5v-3l-32-4z" fill="#f00"/>
      </g>
      <g class="axis-tags"><text x="42" y="216" fill="#0a7cff">Z</text><text x="79" y="256" fill="#0d0">Y</text><text x="96" y="269" fill="#f00">X</text></g>
    </svg>

    <div class="row snapbar"><div class="strip">
      <i class="grip"></i>
      <button class="tool"><svg class="ic"><use href="#ortho"/></svg>正交</button>
      <button class="tool on"><svg class="ic"><use href="#snap"/></svg>对象捕捉</button>
      <button class="tool"><svg class="ic"><use href="#dyn"/></svg>动态输入</button>
    </div><div class="strip">
      <i class="grip"></i>
      <button class="tool"><svg class="ic"><use href="#cross"/></svg>交点</button>
      <button class="tool on"><svg class="ic"><use href="#perp"/></svg>垂点</button>
      <button class="tool on"><svg class="ic"><use href="#mid"/></svg>中点</button>
      <button class="tool"><svg class="ic"><use href="#vertex"/></svg>顶点</button>
      <button class="tool"><svg class="ic"><use href="#coord"/></svg>坐标</button>
    </div><div class="strip offsets">
      <i class="grip"></i>
      <span class="pick p-shift"><select aria-label="偏移方式"><option>不偏移</option></select></span>
      <i class="sep"></i>
      <label for="dx">X=</label><span class="spin"><input id="dx" type="text" value="0" disabled><i></i></span><span>mm</span>
      <label for="dy">Y=</label><span class="spin"><input id="dy" type="text" value="0" disabled><i></i></span><span>mm</span>
      <i class="sep"></i>
      <label class="turn"><input type="checkbox" disabled>旋转</label><span class="spin wide"><input type="text" value="0.000" aria-label="旋转角度" disabled><i></i></span><span>°</span>
    </div></div>

    <div class="rebar-panel">
      <div class="gutter"><svg viewBox="0 0 11 11" width="11" height="11"><path d="M.5.5h10v10H.5z" fill="#ddd" stroke="#444"/><path d="M1 1h9v2H1z" fill="#a55"/><path d="M2 3l7 7m0-7l-7 7" stroke="#222" stroke-width="1.500"/></svg></div>
      <div class="panel-body">
        <div class="strip panel-tools">
          <button class="tool" aria-label="首行" disabled><svg class="ic"><use href="#first"/></svg></button>
          <button class="tool" aria-label="上一行" disabled><svg class="ic"><use href="#prev"/></svg></button>
          <button class="tool" aria-label="下一行"><svg class="ic"><use href="#next"/></svg></button>
          <button class="tool" aria-label="末行"><svg class="ic"><use href="#last"/></svg></button>
          <i class="sep"></i>
          <button class="tool" aria-label="上移" disabled><svg class="ic"><use href="#up"/></svg></button>
          <button class="tool" aria-label="下移"><svg class="ic"><use href="#down"/></svg></button>
          <i class="sep"></i>
          <button class="tool" disabled><svg class="ic"><use href="#insert"/></svg>插入</button>
          <button class="tool" disabled><svg class="ic"><use href="#delrow"/></svg>删除</button>
          <button class="tool"><svg class="ic"><use href="#scale"/></svg>缩尺配筋</button>
          <button class="tool"><svg class="ic"><use href="#info"/></svg>钢筋信息</button>
          <button class="tool"><svg class="ic"><use href="#lib"/></svg>钢筋图库</button>
          <button class="tool"><svg class="ic"><use href="#other"/></svg>其他<i class="caret tight"></i></button>
          <button class="tool">关闭</button>
          <i class="sep"></i>
          <span class="total">单构件钢筋总重(kg)：486.313</span>
        </div>
        <div class="sheet">
          <div class="sheet-view">
          <table>
            <colgroup><col class="c-no"><col class="c-name"><col class="c-dia"><col class="c-lv"><col class="c-fig"><col class="c-shape"><col class="c-formula"><col class="c-desc"><col class="c-len"><col class="c-cnt"><col class="c-lap"><col class="c-loss"><col class="c-wt"><col class="c-sum"></colgroup>
            <thead><tr><th></th><th>筋号</th><th class="hot">直径(mm)</th><th>级别</th><th>图号</th><th>图形</th><th>计算公式</th><th>公式描述</th><th>长度(mm)</th><th>根数</th><th>搭接</th><th>损耗(%)</th><th>单重(kg)</th><th>总</th></tr></thead>
            <tbody>
              <tr class="data"><th class="hot">1*</th><td>X向纵筋.1</td><td class="cell-on">20</td><td class="lv"><svg class="ic"><use href="#level"/></svg></td><td>64</td><td><div class="shape">720<span>720</span>720</div></td><td>460+0+260+720+260+460+0</td><td class="desc">节点内长度+垂直长度+水平长度+垂直长度+节点内长度</td><td>2160</td><td>69</td><td>0</td><td>0</td><td>5.335</td><td>36</td></tr>
              <tr class="data"><th>2</th><td>Y向纵筋.2</td><td>16</td><td class="lv"><svg class="ic"><use href="#level"/></svg></td><td>64</td><td><div class="shape">720<span>13520</span>720</div></td><td>460+0+260+13520+260+460+0</td><td class="desc">节点内长度+垂直长度+水平长度+垂直长度+节点内长度</td><td>14960</td><td>5</td><td>1</td><td>0</td><td>23.637</td><td>11</td></tr>
              <tr><th>3</th><td></td><td></td><td></td><td></td><td></td><td></td><td></td><td></td><td></td><td></td><td></td><td></td><td></td></tr>
            </tbody>
          </table>
          </div>
          <div class="hbar"><svg class="ic"><use href="#chev-l"/></svg><i></i><b></b><svg class="ic"><use href="#chev-r"/></svg></div>
        </div>
      </div>
    </div>
  </section>

  <div class="popup" role="dialog" aria-label="钢筋显示控制面板">
    <h2>钢筋显示控制面板</h2>
    <div class="checks">
      <label><input type="checkbox" checked>X向纵筋</label>
      <label><input type="checkbox" checked>Y向纵筋</label>
      <label><input type="checkbox" checked>显示其它图元</label>
      <label><input type="checkbox" checked>显示详细公式</label>
    </div>
  </div>
</main>

<footer class="status"><span class="st-xy">X=417099&nbsp; Y=17125</span><span class="st-h">层高:2.15m</span><span class="st-b">底标高:-2.2m</span><span class="st-n">1(1)</span><span class="st-fill"></span><span class="st-fps">55 FPS</span></footer>

<footer class="taskbar">
  <button class="start" aria-label="开始"><svg viewBox="0 0 16 16" width="16" height="16"><path d="M0 2.500L7 1.500V7.500H0zM8 1.300L16 0v7.500H8zM0 8.500h7v6l-7-1zM8 8.500h8V16l-8-1.300z" fill="#fff"/></svg></button>
  <div class="cortana"><svg viewBox="0 0 22 22" width="22" height="22"><circle cx="11" cy="11" r="9" fill="none" stroke="#111" stroke-width="2.500"/></svg><input type="text" placeholder="在这里输入你要搜索的内容" aria-label="搜索"><svg viewBox="0 0 14 18" width="14" height="18"><rect x="4" y="1" width="6" height="10" rx="2" fill="none" stroke="#333"/><path d="M1.500 9v4h11V9M7 13v4M4 17h6" fill="none" stroke="#333"/></svg></div>
  <div class="tb-icons">
    <svg viewBox="0 0 18 16" width="18" height="16"><path d="M1 1v2h10V1M1 15v-2h10v2M1 5h10v6H1zM15.500 0v3m0 4v9" fill="none" stroke="#fff"/><path d="M14 4h3v3h-3z" fill="#fff"/></svg>
    <svg viewBox="0 0 24 24" width="24" height="24"><g fill="#e8ecef" stroke="#04141a" stroke-width=".8"><path id="petal" d="M12 12C9 13 2 12 1.500 7 1 2 7 0 10 2c3 2 2 6 2 10z"/><use href="#petal" transform="rotate(90 12 12)"/><use href="#petal" transform="rotate(180 12 12)"/><use href="#petal" transform="rotate(270 12 12)"/></g></svg>
  </div>
  <div class="ie-box"><svg viewBox="0 0 20 20" width="20" height="20"><path d="M3 12h14c1-11-13-11-14-1s12 9 14 4h-5c-2 2-5 0-5-3M7 9h6c-1-4-5-4-6 0" fill="#3ca0f4"/><path d="M18 5c2-6-14-2-17 11-1 4 3 3 6 1" fill="none" stroke="#6cc2ff" stroke-width="1.300"/></svg><svg viewBox="0 0 18 18" width="18" height="18"><circle cx="8" cy="8" r="6.500" fill="none" stroke="#999"/><path d="M13 13l4 4" stroke="#999"/></svg></div>
  <div class="swirl"><svg viewBox="0 0 28 26" width="28" height="26"><path d="M14 8C6 4 0 11 2 18c3 8 13 7 15 1 2-7-7-10-10-5-2 4 3 7 5 4 1-1 0-3-2-3M18 15c1 6-3 9-7 9M6 8c-3 2-5 6-4 10" fill="none" stroke="#ddd" stroke-width="1.400"/><path d="M14 11c2-2 1-5 2-8 1-2 3-2 4-3 1 1 3 1 4 3 1 3 0 6 2 8zM18 12h4v2h-4z" fill="#e0ad10"/></svg></div>
  <div class="apps">
    <button aria-label="广联达"><svg viewBox="0 0 24 24"><rect width="24" height="24" rx="4" fill="#1292ee"/><path d="M11 10V7c0-2 3-2 4 0M11 9v7c0 4-6 3-6-1M5 13h13m0 0c1 4-3 5-5 3" fill="none" stroke="#fff" stroke-width="2" stroke-linecap="round"/></svg></button>
    <button aria-label="浏览器"><svg viewBox="0 0 24 24"><path d="M23 2C12-2 1 4 1 13s12 14 19 7c3-3 3-8 0-11 0 6-3 9-7 8-6-2-5-9 1-11 3-1 6-1 9-4z" fill="#24a9f4"/></svg></button>
    <button aria-label="词典"><svg viewBox="0 0 24 24"><rect width="24" height="24" rx="3" fill="#1b73c8"/><path d="M3 7l9 2 9-2v12l-9 1-9-1z" fill="#f5f8fa" stroke="#9cc"/><path d="M12 9v11M5 15l2-5 2 5m5-1h5m-5 3h5" stroke="#567" fill="none"/><circle cx="15" cy="7" r="4" fill="#a4d4fa" stroke="#ddd"/><path d="M18 10l3 4" stroke="#eee" stroke-width="2"/></svg></button>
    <button aria-label="文档阅读"><svg viewBox="0 0 24 24"><rect width="24" height="24" rx="3" fill="#b45c14" stroke="#e1b98c"/><path d="M5 17V8h3v4H5m5-4v8h4V8zm2-2v12m5-1V8h3m-3 4h3" fill="none" stroke="#fff" stroke-width="1.200"/></svg></button>
    <button aria-label="记事"><svg viewBox="0 0 24 24"><rect width="24" height="24" rx="3" fill="#f29b1d"/><path d="M4 5h14v15H4z" fill="#fff7df"/><path d="M6 9h6m-6 4h5m-5 4h8" stroke="#555"/><path d="M21 1l1 2-7 12-3 2 1-4z" fill="#8b2e14"/></svg></button>
  </div>
  <div class="updown"><svg class="ic"><use href="#chev-u"/></svg><svg class="ic"><use href="#chev-d"/></svg></div>
  <div class="cpu">46%<br>CPU使用</div>
  <div class="tray">
    <svg viewBox="0 0 16 16"><circle cx="5" cy="8" r="2.500"/><circle cx="11" cy="3.500" r="2.500"/><path d="M1 15c0-5 8-5 8 0M8 8c4-3 7 0 7 3"/></svg>
    <svg viewBox="0 0 16 16" class="t-gap"><path d="M3 11l5-5 5 5"/></svg>
    <svg viewBox="0 0 18 16"><path d="M7 4.500h9v7H5M1 4v3c0 3 5 3 5 0V4zm1-3v3m3-3v3M3.500 9v3H6"/></svg>
    <svg viewBox="0 0 16 16"><path d="M2 14C2 7 7 3 15 3M5 14c0-5 4-8 10-8M8 14c0-3 3-5 7-5"/><circle cx="13" cy="13" r="1.800" fill="#fff" stroke="none"/></svg>
    <svg viewBox="0 0 16 16"><path d="M1 6v4h3l4 4V2L4 6zM10 6v4m2-6c2 3 2 5 0 8m2-10c3 4 3 8 0 12"/></svg>
    <svg viewBox="0 0 24 16" class="kb"><path d="M1 2h22v12H1z"/><path d="M4 5.500h17M4 8.500h17M7 11.500h10" stroke-dasharray="2 1"/></svg>
    <span class="ime">A</span>
    <svg viewBox="0 0 16 16" class="sogou"><path d="M0 2l14-2 2 13-14 3z" fill="#f4511e" stroke="none"/><path d="M12 4C3 3 3 8 8 8s5 4-4 4" stroke="#fff" stroke-width="2.500"/></svg>
  </div>
  <time class="clock">19:38<br>2018/11/9</time>
  <button class="notice" aria-label="通知中心"><svg viewBox="0 0 18 18" width="18" height="18"><path d="M1.500 1.500h15v11h-4l-3 3-3-3h-5z" fill="none" stroke="#fff"/></svg></button>
</footer>
</div>
<script src="scene.js"></script>
</body>
</html>
```
FILE: styles.css
```css
* { box-sizing: border-box; }
body { margin: 0; background: #f0f0f0; color: #000; font: 12px/16px "Open Sans", "Noto Sans CJK SC", sans-serif; overflow: hidden; }
button, input, select { font: inherit; color: inherit; margin: 0; }
button { border: 0; padding: 0; background: none; white-space: nowrap; }
h1, h2 { margin: 0; font: inherit; }
ul { list-style: none; margin: 0; padding: 0; }
a { color: inherit; text-decoration: none; }
.sprite { position: absolute; width: 0; height: 0; }
.ic { width: 16px; height: 16px; flex: none; display: block; }
.app { display: flex; flex-direction: column; height: 100vh; }

/* title bar */
.titlebar { position: relative; height: 23px; background: #fff; display: flex; align-items: center; padding-left: 2px; gap: 5px; flex: none; }
.titlebar h1 { flex: 1; white-space: nowrap; }
.path { font-size: 13px; }
.after-ball { margin-left: 35px; }
.winbtns { display: flex; }
.winbtns button { width: 46px; display: flex; justify-content: center; }
.winbtns svg { width: 16px; height: 16px; }
.ball { position: absolute; left: 718px; top: -27px; width: 46px; height: 46px; border-radius: 50%; background: #35b452; border: 2px solid #d8dcd9; box-shadow: 0 2px 4px #0005; color: #fff; font-weight: 600; text-align: center; padding-top: 24px; z-index: 3; }

/* menu */
.menubar { height: 28px; flex: none; display: flex; align-items: center; gap: 11px; padding-left: 7px; white-space: nowrap; }
.menubar > .tool { padding: 0; }
.blank { margin-left: auto; width: 24px; height: 24px; background: linear-gradient(90deg, #fafafa, #f1f1f1); }
.account { display: flex; align-items: center; gap: 4px; height: 26px; background: linear-gradient(#fafafa, #f0f0f0); margin-left: -7px; padding-right: 5px; }
.account .tool { padding: 0 2px; }

/* tool strips */
.tool { display: flex; align-items: center; gap: 3px; padding: 0 3px; height: 24px; border: 1px solid transparent; }
.tool:disabled { color: #8c8c8c; }
.tool.on { background: #dbe9f5; border-color: #0f7bd8; }
.tool.pale { background: #fff; }
.caret { width: 0; height: 0; border: 3px solid transparent; border-top-color: currentColor; border-bottom: 0; margin: 1px 0 0 3px; }
.caret.tight { margin-left: -1px; }
.strip { display: flex; align-items: center; height: 26px; background: linear-gradient(#fbfbfb, #f0f0f0); }
.sep { width: 1px; height: 16px; background: #c2c2c2; margin: 0 2px 0 3px; flex: none; }
.grip { width: 3px; height: 15px; margin: 0 1px 0 4px; background: repeating-linear-gradient(#bdbdbd 0 2px, transparent 2px 4px); flex: none; }
.more { margin-left: auto; align-self: flex-start; padding-right: 4px; font-size: 14px; line-height: 14px; }
.sigma { width: 16px; text-align: center; font-size: 14px; }
.mainbar { display: flex; height: 28px; flex: none; gap: 1px; padding-left: 1px; align-items: center; }
.s-file { width: 151px; flex: none; }
.s-calc { width: 550px; flex: none; gap: 1px; }
.s-view { flex: 1; }

/* work area */
.work { position: relative; flex: 1; min-height: 0; display: flex; }
.dock { display: flex; flex-direction: column; flex: none; padding: 2px 0 1px; font-family: "Liberation Serif", "Noto Sans CJK SC", serif; }
.nav-dock { width: 161px; margin-right: 5px; }
.list-dock { width: 164px; margin-right: 3px; }
.dock-head { display: flex; align-items: center; height: 15px; border: 1px solid #8b8b8b; flex: none; gap: 2px; margin-bottom: 2px; }
.dock-head span { flex: 1; white-space: nowrap; }
.section { height: 22px; border: 1px solid #a5a5a5; background: linear-gradient(#f6f6f6, #ebebeb); flex: none; }
.expanders { height: 27px; flex: none; background: linear-gradient(#fff, #eee); padding-top: 5px; }
.treebox { flex: 1; min-height: 0; margin: 0 1px 2px 2px; border: 1px solid #828790; background: #fff; display: grid; grid-template: minmax(0, 1fr) 17px / minmax(0, 1fr) 17px; }
.tree { overflow: hidden; padding-top: 1px; }
.tree > li { border-left: 1px dotted #999; margin-left: 1px; }
.node { display: flex; align-items: center; gap: 5px; height: 16px; white-space: nowrap; }
.node::before { content: ""; width: 4px; height: 4px; background: linear-gradient(90deg, #bbb 50%, transparent 50%); }
.open > .node::before { background: linear-gradient(135deg, transparent 50%, #444 50%); }
.tree ul { border-left: 1px dotted #888; margin-left: 19px; }
.tree ul li { display: flex; align-items: center; gap: 5px; height: 16px; white-space: nowrap; }
.tree ul li::before { content: ""; width: 9px; margin-right: -5px; border-top: 1px dotted #888; }
.current { display: flex; gap: 5px; background: #d9d9d9; padding-right: 5px; }
.vbar, .hbar { background: #f0f0f0; }
.vbar { display: grid; grid-template-rows: 16px 80fr 286fr 72fr 16px; justify-items: center; }
.vbar i { grid-row: 3; width: 15px; background: #cdcdcd; }
.vbar svg:last-child { grid-row: 5; }
.hbar { display: flex; grid-column: 1 / -1; align-items: center; padding-right: 17px; }
.hbar i { width: 95px; height: 15px; background: #cdcdcd; margin: 0 auto 0 10px; }

.list-tools { display: flex; height: 25px; flex: none; align-items: center; background: linear-gradient(#fff, #f0f0f0); font-family: "Open Sans", "Noto Sans CJK SC", sans-serif; }
.finder { display: flex; height: 27px; padding: 1px 0 1px 1px; flex: none; font-family: "Noto Sans CJK SC", sans-serif; }
.finder input { flex: 1; min-width: 0; border: 1px solid #828790; padding: 0 2px; background: #fff; }
.finder button { width: 25px; display: flex; align-items: center; justify-content: center; }
::placeholder { color: #757575; opacity: 1; }
.listbox { flex: 1; min-height: 0; border: 1px solid #828790; background: #fff; }
.root { display: flex; height: 18px; align-items: center; padding-left: 3px; gap: 4px; }
.parts { margin: 175px 0 0 31px; border-left: 1px dotted #888; height: 152px; }
.parts li { display: flex; align-items: center; gap: 5px; height: 16px; }
.parts li::before { content: ""; width: 9px; border-top: 1px dotted #888; margin-right: -5px; }
.chosen { display: flex; gap: 5px; background: #2f68c3; padding-right: 5px; }

.stage { flex: 1; min-width: 0; display: flex; flex-direction: column; }
.row { height: 28px; flex: none; display: flex; align-items: center; gap: 2px; white-space: nowrap; }
.pick { display: grid; align-items: center; background: #fff; width: 69px; height: 22px; margin-right: 3px; }
.pick > *, .pick::after { grid-area: 1 / 1; }
.pick::after { content: ""; justify-self: end; border: 3px solid transparent; border-top-color: #000; border-bottom: 0; margin-right: 4px; pointer-events: none; }
.pick select { appearance: none; border: 0; background: none; padding: 0 3px; width: 100%; height: 22px; outline: 0; }
.p-floor { width: 57px; }
.stub { margin-left: 49px; width: 30px; }
.scene { flex: 1; min-height: 0; width: 100%; display: block; }
.axis-lines { stroke: #f00; fill: none; }
.axis-rings { stroke: #087c08; fill: none; }
.axis-names { fill: #ddd; font: bold 16px "Liberation Mono", monospace; text-anchor: middle; }
.rebar { stroke: #a39a97; fill: none; }
.outline { stroke: #dedede; stroke-width: 1.5px; fill: none; shape-rendering: auto; }
.near { stroke: #fff; stroke-width: 2px; }
.orbit-ring { stroke: #a3a3a3; fill: none; }
.axis-tags { font: 14px "Liberation Sans", sans-serif; }

.snapbar { height: 30px; gap: 2px; }
.offsets { color: #8c8c8c; }
.offsets label { margin: 0 3px 0 1px; }
.offsets .pick { color: #000; }
.p-shift { width: 57px; }
.spin { display: flex; align-items: center; width: 58px; height: 23px; border: 1px solid #7a7a7a; margin-right: 1px; }
.spin input { flex: 1; min-width: 0; border: 0; background: none; text-align: right; padding: 0 10px 0 0; }
.spin i { width: 5px; height: 15px; margin-right: 4px; display: flex; flex-direction: column; justify-content: space-between; }
.spin i::before, .spin i::after { content: ""; border: 2px solid transparent; border-top: 0; border-bottom: 3px solid #666; }
.spin i::after { border-top: 3px solid #666; border-bottom: 0; }
.spin + span + label { margin-left: 4px; }
.wide { width: 68px; }
.turn { display: flex; align-items: center; gap: 9px; color: #222; }
.turn input { appearance: none; width: 11px; height: 11px; border: 1px solid #999; }

.rebar-panel { flex: none; height: 204px; display: flex; padding: 3px 1px 1px 0; }
.gutter { width: 12px; flex: none; padding-left: 1px; background: radial-gradient(circle at 2px 2px, #c8c8c8 1px, transparent 2px) 2px 18px / 5px 5px; }
.gutter svg { display: block; background: #f0f0f0; box-shadow: 0 -3px #f0f0f0, 0 3px #f0f0f0; }
.panel-body { flex: 1; min-width: 0; display: flex; flex-direction: column; }
.panel-tools { flex: none; height: 27px; white-space: nowrap; }
.total { margin-left: 3px; }
.sheet { flex: 1; min-height: 0; display: flex; flex-direction: column; border: 1px solid #8e959e; background: #fff; }
.sheet-view { flex: 1; min-height: 0; overflow: hidden; }
table { border-collapse: collapse; table-layout: fixed; width: 100%; font: 12px/13px "Liberation Serif", "Noto Sans CJK SC", serif; }
th, td { border: 1px solid #b9b9b9; border-width: 0 1px 1px 0; padding: 0 2px; white-space: nowrap; overflow: hidden; font-weight: normal; }
td { text-align: left; }
th { background: linear-gradient(#fff, #ededed); text-align: center; padding: 0; }
thead tr { height: 19px; }
tbody tr { height: 18px; }
tbody .data { height: 34px; }
.data td { background: #cdffda; }
.data .cell-on { background: #aeebd9; }
th.hot { background: linear-gradient(#f9cd84, #f2b95f); color: #5a0a46; }
.data th.hot { background: #ffd18b; font-weight: bold; }
td:nth-child(2) { border-right: 1px solid #000; }
.lv .ic { margin: auto; }
td.desc { white-space: normal; line-height: 12px; }
.shape { display: flex; justify-content: center; align-items: center; gap: 3px; }
.shape span { width: 121px; height: 15px; border: 2px solid #000; border-top: 0; color: #f00; text-align: center; line-height: 12px; }
.c-no { width: 33px; } .c-name { width: 73px; } .c-dia { width: 56px; } .c-lv { width: 36px; } .c-fig { width: 33px; } .c-shape { width: 201px; } .c-formula { width: 166px; } .c-desc { width: 156px; } .c-len { width: 61px; } .c-cnt { width: 38px; } .c-lap { width: 39px; } .c-loss { width: 49px; } .c-wt { width: 61px; }
.sheet .hbar { height: 17px; padding-right: 2px; flex: none; }
.sheet .hbar i { flex: 598; margin: 0 0 0 2px; }
.sheet .hbar b { flex: 384; }

/* floating panel */
.popup { position: absolute; left: 175px; top: 88px; width: 168px; height: 178px; background: #fff; border: 1px solid #777; padding: 1px 1px 1px 2px; box-shadow: 0 2px 8px #0007; display: flex; flex-direction: column; z-index: 2; }
.popup h2 { height: 30px; color: #969696; padding: 6px 6px; }
.checks { flex: 1; border: 1px solid #828790; padding: 2px 3px; font-family: "Liberation Serif", "Noto Sans CJK SC", serif; display: flex; flex-direction: column; }
.checks label { display: flex; align-items: center; gap: 3px; height: 12px; }
.checks input { appearance: none; width: 11px; height: 11px; border: 1px solid #888; display: grid; place-items: center; }
.checks input::after { content: ""; width: 7px; height: 3px; border: solid #444; border-width: 0 0 1px 1px; transform: rotate(-45deg); margin-bottom: 2px; }

/* status */
.status { display: flex; gap: 2px; height: 21px; flex: none; font-family: "Liberation Serif", "Noto Sans CJK SC", serif; white-space: nowrap; }
.status span { border: 1px solid #cfcfcf; padding: 2px 1px 0; background: linear-gradient(#fdfdfd, #f0f0f0); }
.st-xy { width: 148px; } .st-h { width: 78px; } .st-b { width: 98px; } .st-n { width: 48px; } .st-fill { flex: 1; } .st-fps { width: 70px; }

/* task bar */
.taskbar { height: 40px; flex: none; display: flex; align-items: center; background: linear-gradient(90deg, #05171c, #061a20 85%, #050b0d); color: #fff; white-space: nowrap; }
.start { width: 48px; height: 40px; background: #050808; display: flex; align-items: center; justify-content: center; }
.cortana { width: 344px; height: 40px; background: #f2f2f2; display: flex; align-items: center; padding: 0 14px 0 9px; gap: 9px; color: #333; }
.cortana input { flex: 1; min-width: 0; border: 0; background: none; font: 14px/20px "Noto Sans CJK SC", sans-serif; padding: 0; }
.cortana ::placeholder { color: #333; }
.tb-icons { display: flex; align-items: center; gap: 30px; padding: 0 14px; }
.ie-box { width: 150px; height: 30px; border: 1px solid #777; background: #4a4a4a; display: flex; align-items: center; justify-content: space-between; padding: 0 6px 0 3px; }
.swirl { padding: 0 15px 0 13px; height: 30px; }
.apps { display: flex; gap: 9px; }
.apps button { width: 33px; height: 40px; border-bottom: 2px solid #76b9ed; display: flex; align-items: center; justify-content: center; }
.apps svg { width: 24px; height: 24px; }
.updown { width: 17px; height: 40px; background: #f0f0f0; margin-left: 7px; display: flex; flex-direction: column; justify-content: space-between; align-items: center; }
.cpu, .clock { text-align: center; line-height: 18px; }
.cpu { width: 86px; }
.tray { flex: 1; display: flex; align-items: center; gap: 8px; padding-left: 13px; }
.tray svg { width: 16px; height: 16px; fill: none; stroke: #fff; flex: none; }
.tray .t-gap { margin-left: 12px; }
.tray .kb { width: 24px; }
.tray .sogou { margin-left: 3px; }
.ime { font-size: 18px; width: 16px; text-align: center; }
.clock { width: 82px; }
.notice { width: 30px; margin-right: 18px; display: flex; justify-content: center; }
```
FILE: scene.js
```js
// Reinforcement of the column pier: stalks, cross bars and long bars
// repeated at a constant pitch along the beam direction.
const group = document.getElementById('rebar');
const PITCH = 9, RISE = 0.614;

function line(x1, y1, x2, y2, width, dash) {
  const el = document.createElementNS('http://www.w3.org/2000/svg', 'line');
  Object.entries({ x1, y1, x2, y2, 'stroke-width': width }).forEach(([k, v]) => el.setAttribute(k, v));
  if (dash) el.setAttribute('stroke-dasharray', dash);
  group.appendChild(el);
}

for (let i = 0; i < 64; i++) {
  const dx = i * PITCH, dy = dx * RISE;
  line(148 + dx, 207 - dy, 148 + dx, 250 - dy, 2);
  line(147 + dx, 250 - dy, 147 + dx, 290 - dy, 2);
  line(226 + dx, 218 - dy, 226 + dx, 260 - dy, 2);
  line(225 + dx, 260 - dy, 225 + dx, 298 - dy, 2);
  line(147 + dx, 290 - dy, 225 + dx, 299 - dy, 2);
}
for (const [x, top, end] of [[169, 212, 290], [191, 244, 262], [209, 216, 262]]) line(x, top, x, end, 1);
for (let k = 0; k < 5; k++) {
  const x = 147 + k * 19.5, y = 290 + k * 2.25;
  line(x, y, x + 520, y - 520 * 0.616, 1, k < 4 ? '7 2' : '');
}
```
